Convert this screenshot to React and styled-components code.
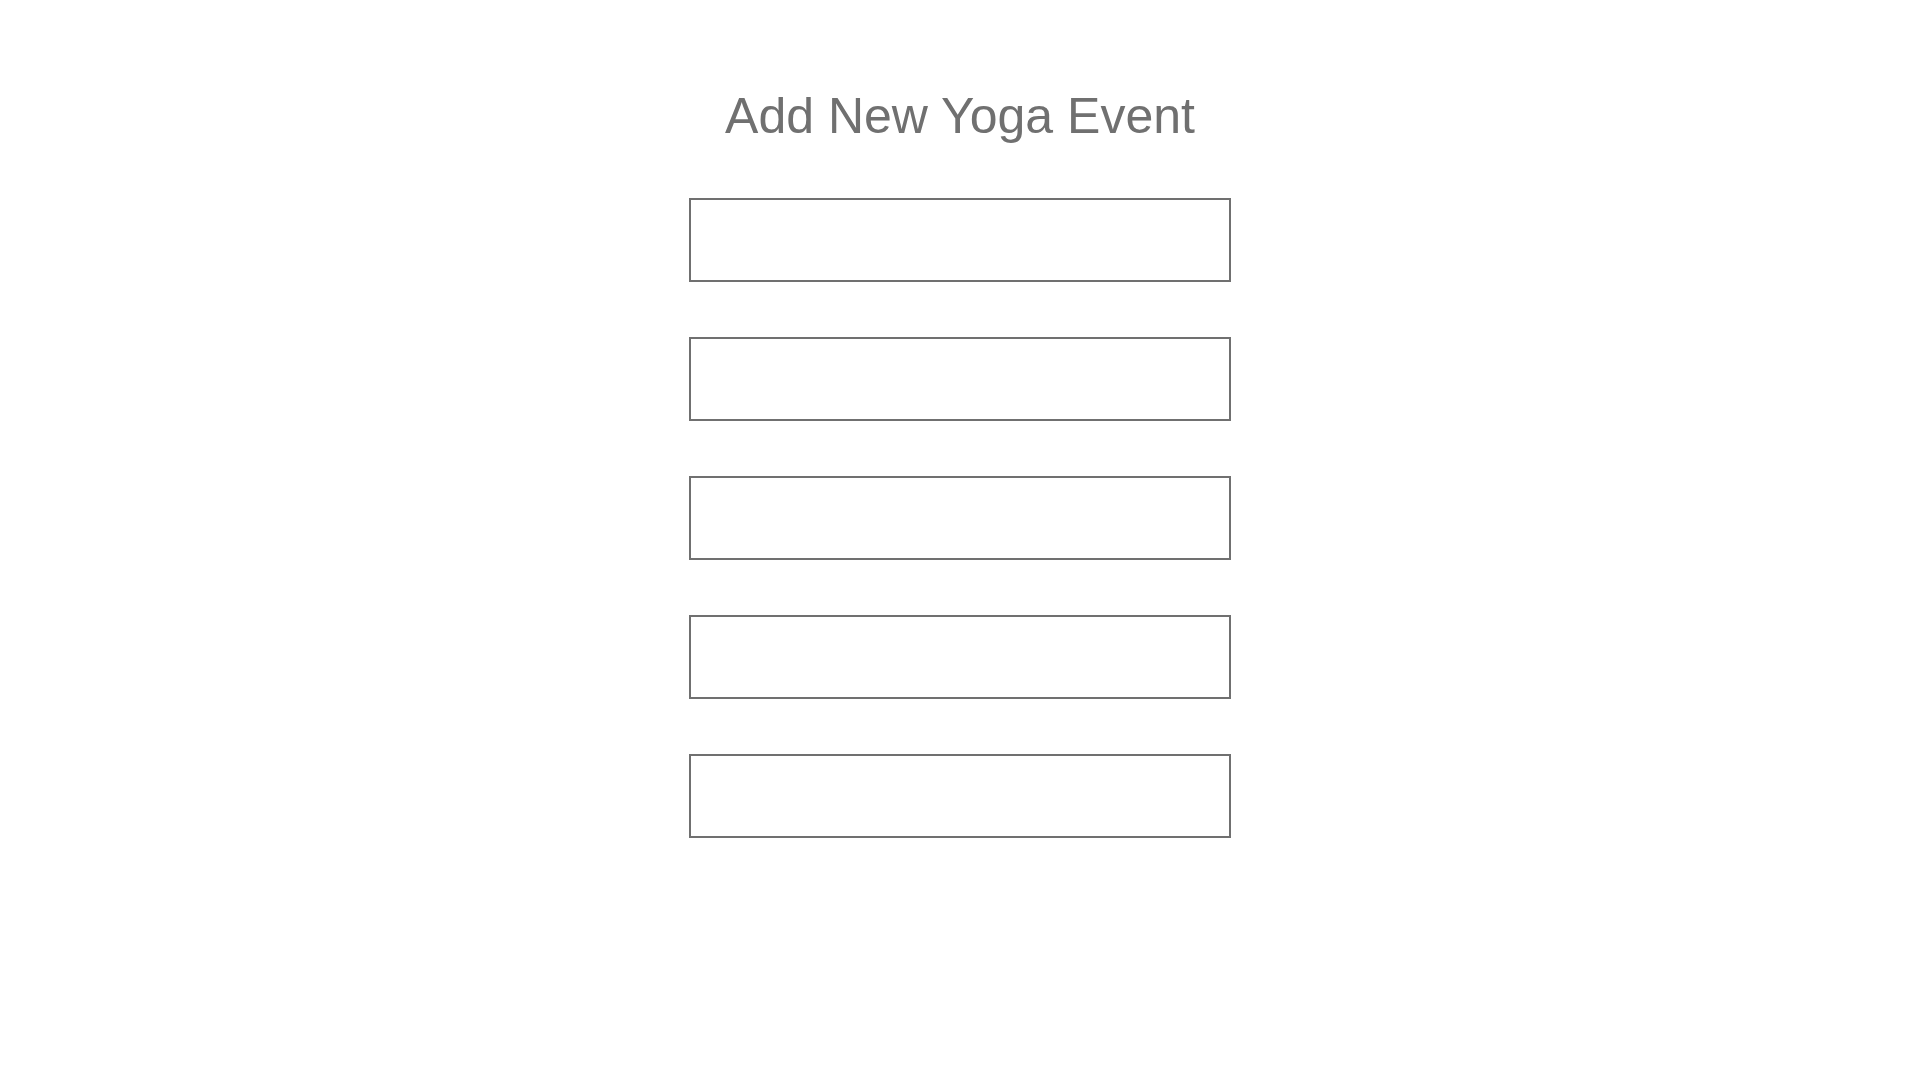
import React from 'react';
import styled, { createGlobalStyle } from 'styled-components';

const GlobalStyle = createGlobalStyle`
  body {
    margin: 0;
    background: #ffffff;
    font-family: "Liberation Sans", Arial, sans-serif;
  }
`;

const Page = styled('div')`
  display: flex;
  flex-direction: column;
  align-items: center;
  padding-top: 91px;
  min-height: 100vh;
  box-sizing: border-box;
`;

const Title = styled('h1')`
  margin: 0 0 57px;
  font-size: 50px;
  line-height: 50px;
  font-weight: 400;
  color: #707070;
`;

const Form = styled('form')`
  display: flex;
  flex-direction: column;
  gap: 55px;
`;

const Field = styled('input')`
  width: 542px;
  height: 84px;
  box-sizing: border-box;
  border: 2px solid #707070;
  border-radius: 0;
  background: #ffffff;
  padding: 0 16px;
  font-family: inherit;
  font-size: 24px;
  color: #707070;
  outline: none;
`;

const fields = ['name', 'date', 'time', 'location', 'instructor'];

const App = () => {
  return (
    <Page>
      <GlobalStyle />
      <Title>Add New Yoga Event</Title>
      <Form onSubmit={e => e.preventDefault()}>
        {fields.map(f => (
          <Field key={f} name={f} type='text' aria-label={f} />
        ))}
      </Form>
    </Page>
  );
};

export default App;
